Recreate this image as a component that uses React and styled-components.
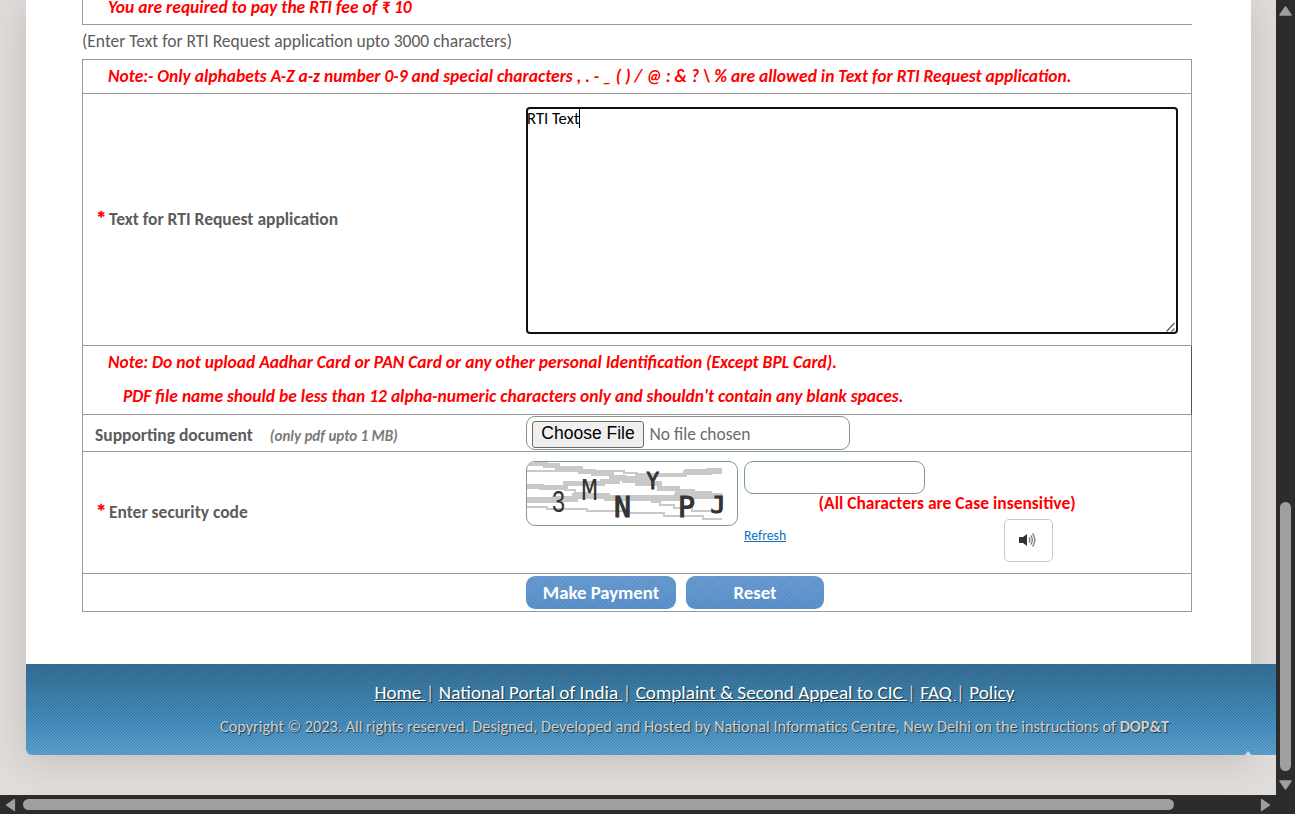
import React from "react";
import styled, { createGlobalStyle } from "styled-components";

const textFont = `Calibri, Carlito, Lato, sans-serif`;
const line = "#999";
const fieldBorder = "#839b83";

const GlobalStyle = createGlobalStyle`
  *, *::before, *::after { box-sizing: border-box; }
  body { margin: 0; overflow: hidden; }
`;

const Screen = styled.div`
  display: grid;
  grid-template: 795px 19px / 1276px 19px;
  width: 1295px;
  height: 814px;
  overflow: hidden;
  background: #2c2c2c;
  font-family: ${textFont};
  font-size: 17.5px;
  line-height: 34px;
  color: #5c5c5c;
`;

const Viewport = styled.main`
  overflow: hidden;
  padding-left: 26px;
  background: #dfdcda;
`;

const Page = styled.div`
  display: flex;
  flex-direction: column;
  width: 1225px;
  height: 755px;
  background: #fff;
  border-radius: 0 0 6px 6px;
  box-shadow: 0 5px 36px rgba(0, 0, 0, 0.14);
`;

const Content = styled.div`
  display: flex;
  flex-direction: column;
  height: 664px;
  padding: 0 59px 0 56px;
`;

const FeeBox = styled.div`
  height: 25px;
  padding-left: 25px;
  border: solid ${line};
  border-width: 0 0 1px 1px;
  line-height: 14px;
`;

const Hint = styled.div`
  height: 34px;
  line-height: 32px;
`;

const Table = styled.div`
  width: 1110px;
  border: solid ${line};
  border-width: 1px 1px 0;
`;

const Row = styled.div`
  display: flex;
  align-items: ${(p) => (p.$top ? "flex-start" : "center")};
  height: ${(p) => p.$h}px;
  border-bottom: 1px solid ${line};
`;

const NoteRow = styled(Row)`
  flex-direction: column;
  align-items: flex-start;
  justify-content: center;
  padding: 0 0 2px 25px;
  ${(p) => p.$edge && `margin-right: -1px; border-right: 1px solid #5a5052; padding-bottom: 3px;`}
`;

const Note = styled.div`
  color: #f00;
  font-weight: 700;
  font-style: italic;
  white-space: pre;
  padding-left: ${(p) => p.$indent || 0}px;
`;

const Label = styled.div`
  display: flex;
  align-items: baseline;
  align-self: center;
  width: 443px;
  padding: ${(p) => (p.$plain ? "5px 0 0 12px" : "0 0 2px 13px")};
  font-weight: 700;
  white-space: pre;
`;

const Star = styled.span`
  width: 13px;
  color: #f00;
  font-size: 21px;
  line-height: 30px;
  -webkit-text-stroke: 0.4px #f00;
`;

const SmallNote = styled.span`
  margin-left: 17px;
  color: #7a7a7a;
  font-size: 15px;
  font-style: italic;
`;

const TextArea = styled.div`
  position: relative;
  display: flex;
  width: 652px;
  height: 227px;
  margin-top: 1px;
  border: 2px solid #101010;
  border-radius: 4px;
  color: #000;
  font-size: 16.67px;
  line-height: 18px;
`;

const TypedText = styled.span`
  height: 19px;
  margin-left: -1px;
  border-right: 1px solid #000;
`;

const Grip = styled.svg`
  position: absolute;
  right: 0;
  bottom: 0;
`;

const FileField = styled.div`
  display: flex;
  align-items: center;
  gap: 5.5px;
  width: 324px;
  height: 34px;
  padding: 2px 0 0 5px;
  border: 1px solid ${fieldBorder};
  border-radius: 9px;
  color: #6b6b6b;
`;

const FileButton = styled.button`
  width: 112px;
  height: 27px;
  padding: 0 0 1px;
  border: 1px solid #6b6b6b;
  border-radius: 3px;
  background: #efefef;
  color: #000;
  font: 17.5px "Liberation Sans", Arial, sans-serif;
`;

const Captcha = styled.svg`
  display: block;
  width: 212px;
  height: 65px;
  margin: 9px 6px 0 0;
  border: 1px solid ${fieldBorder};
  border-radius: 9px;
`;

const CodeColumn = styled.div`
  display: flex;
  flex-direction: column;
  padding-top: 9px;
`;

const CodeField = styled.input`
  width: 181px;
  height: 33px;
  border: 1px solid ${fieldBorder};
  border-radius: 9px;
  background: #fff;
`;

const CaseNote = styled.div`
  height: 25px;
  padding-left: 74.6px;
  color: #f00;
  font-weight: 700;
  line-height: 18px;
`;

const RefreshLine = styled.div`
  display: flex;
  justify-content: space-between;
  width: 309px;
`;

const Refresh = styled.a`
  color: #1472bd;
  font-size: 13.75px;
  line-height: 33px;
  text-decoration: underline;
`;

const AudioButton = styled.button`
  display: flex;
  align-items: center;
  justify-content: center;
  width: 49px;
  height: 43px;
  padding: 0 1px 1px 0;
  border: 1px solid #c9c9c9;
  border-radius: 5px;
  background: #fff;
`;

const Action = styled.button`
  width: ${(p) => p.$w}px;
  height: 33px;
  margin: 2px 10px 0 0;
  padding: 0 0 1px;
  border: 0;
  border-radius: 9px;
  background:
    repeating-linear-gradient(45deg, rgba(30, 80, 150, 0.07) 0 1px, transparent 1px 3px),
    repeating-linear-gradient(-45deg, rgba(30, 80, 150, 0.07) 0 1px, transparent 1px 3px),
    linear-gradient(#6a9cd1, #5c92cb);
  color: #fff;
  font: 700 18.75px ${textFont};
`;

const Footer = styled.footer`
  position: relative;
  display: flex;
  flex-direction: column;
  align-items: center;
  width: 1336px;
  height: 91px;
  padding-top: 12px;
  border-radius: 0 0 0 6px;
  background:
    linear-gradient(45deg, transparent 36%, rgba(10, 50, 80, 0.26) 36% 64%, transparent 64%) 0 0 / 3px 3px,
    linear-gradient(#376f97 0%, #4085b0 40%, #4791c3 65%, #62a5d4 100%);
  color: #d3cec9;
  text-shadow: 1px 1px 1px rgba(0, 0, 0, 0.6);
`;

const LinkLine = styled.nav`
  width: 1336px;
  padding-left: 348.5px;
  font-size: 19.17px;
  white-space: pre;
`;

const FootLink = styled.a`
  color: #fff;
  text-decoration: underline;
`;

const Copyright = styled.div`
  width: 1336px;
  padding-left: 194px;
  font-size: 16.25px;
  white-space: pre;
`;

const Notch = styled.svg`
  position: absolute;
  left: 1219px;
  bottom: 0;
`;

const VBar = styled.div`
  display: flex;
  flex-direction: column;
  align-items: center;
  padding: 6px 0 4px;
`;

const HBar = styled.div`
  display: flex;
  align-items: center;
  padding-left: 4px;
`;

const Thumb = styled.div`
  flex: none;
  width: ${(p) => p.$w}px;
  height: ${(p) => p.$h}px;
  margin: ${(p) => p.$m};
  border-radius: 6px;
  background: #9f9f9f;
`;

const Arrow = styled.svg`
  display: block;
  flex: none;
  transform: rotate(${(p) => p.$turn || 0}deg);
`;

function ScrollArrow({ turn }) {
  return (
    <Arrow $turn={turn} width="13" height="10" viewBox="0 0 13 10">
      <path d="M6.5 1 L12 9 H1 Z" fill="#9f9f9f" stroke="#9f9f9f" strokeWidth="1.4" strokeLinejoin="round" />
    </Arrow>
  );
}

const noise = [
  { w: 5, d: "M1 1 H18 V3 H30 V6 H53 V9 H66 V11 H84 V15 H97 V18 H110 V21 H132 V26 H150 V29 H165 V31 H182 V34 H196" },
  { w: 2, d: "M0 9 H97 V11 H110 V13 H124" },
  { w: 4, d: "M108 13 H158 V10 H176" },
  { w: 6, d: "M158 10 H182 V9 H195" },
  { w: 5, d: "M0 24 H14 V25 H38 V21 H75 V19 H90 V16 H125" },
  { w: 6, d: "M0 38 H28 V37 H48 V34 H80 V36 H150 V34 H195" },
  { w: 2, d: "M0 45 H20 V47 H60 V49 H102 V51 H137 V54 H176 V57 H195" },
  { w: 2, d: "M37 28 H48 V31 H62" },
  { w: 2, d: "M124 40 H133 V43 H147 V46 H165 V49 H195" },
];

const glyphs = [
  { c: "3", x: 24.5, y: 50, s: 28, w: 14, thin: true },
  { c: "M", x: 54, y: 38, s: 29, w: 17, thin: true },
  { c: "Y", x: 119.5, y: 27, s: 23, w: 12.5 },
  { c: "N", x: 87, y: 55, s: 28.5, w: 17 },
  { c: "P", x: 151, y: 55, s: 28.5, w: 17 },
  { c: "J", x: 183.5, y: 50.5, s: 22.5, w: 15 },
];

function CaptchaImage() {
  return (
    <Captcha viewBox="0 0 210 63">
      <g fill="none" stroke="#c9c9c9" shapeRendering="crispEdges">
        {noise.map((n, i) => (
          <path key={i} d={n.d} strokeWidth={n.w} />
        ))}
      </g>
      {glyphs.map((g) => (
        <text
          key={g.c}
          x={g.x}
          y={g.y}
          fontFamily={g.thin ? "'Liberation Mono', monospace" : "'DejaVu Sans Mono', monospace"}
          fontSize={g.thin ? g.s * 1.1 : g.s}
          fill="#333"
          stroke="#333"
          strokeWidth={g.thin ? 0 : 1.1}
          textLength={g.w}
          lengthAdjust="spacingAndGlyphs"
        >
          {g.c}
        </text>
      ))}
    </Captcha>
  );
}

function Speaker() {
  return (
    <svg width="18" height="16" viewBox="0 0 18 16">
      <path d="M0 5 H4 L8 2 V14 L4 11 H0 Z" fill="#333" />
      <g fill="none" stroke="#858585" strokeWidth="1.4">
        <path d="M10 5.5 Q11.8 8 10 10.5" />
        <path d="M11.8 3.5 Q15 8 11.8 12.5" />
        <path d="M13.5 1.5 Q18.3 8 13.5 14.5" />
      </g>
    </svg>
  );
}

const links = ["Home ", "National Portal of India ", "Complaint & Second Appeal to CIC ", "FAQ ", "Policy"];

export default function App() {
  return (
    <Screen>
      <GlobalStyle />
      <Viewport>
        <Page>
          <Content>
            <FeeBox>
              <Note>You are required to pay the RTI fee of ₹ 10</Note>
            </FeeBox>
            <Hint>(Enter Text for RTI Request application upto 3000 characters)</Hint>
            <Table>
              <NoteRow $h={34}>
                <Note>
                  {"Note:- Only alphabets A-Z a-z number 0-9 and special characters , . - _ ( ) / @ : & ? \\ % are allowed in Text for RTI Request application."}
                </Note>
              </NoteRow>
              <Row $h={252}>
                <Label>
                  <Star>*</Star>Text for RTI Request application
                </Label>
                <TextArea>
                  <TypedText>RTI Text</TypedText>
                  <Grip width="10" height="10" viewBox="0 0 10 10" fill="none" stroke="#555" strokeWidth="1.1">
                    <path d="M0.5 9.5 L8.5 1 M5.5 9.5 L8.5 6.5" />
                  </Grip>
                </TextArea>
              </Row>
              <NoteRow $h={69} $edge>
                <Note>Note: Do not upload Aadhar Card or PAN Card or any other personal Identification (Except BPL Card).</Note>
                <Note $indent={15}>
                  PDF file name should be less than 12 alpha-numeric characters only and shouldn't contain any blank spaces.
                </Note>
              </NoteRow>
              <Row $h={37}>
                <Label $plain>
                  Supporting document<SmallNote>(only pdf upto 1 MB)</SmallNote>
                </Label>
                <FileField>
                  <FileButton>Choose File</FileButton>
                  No file chosen
                </FileField>
              </Row>
              <Row $h={122} $top>
                <Label>
                  <Star>*</Star>Enter security code
                </Label>
                <CaptchaImage />
                <CodeColumn>
                  <CodeField />
                  <CaseNote>(All Characters are Case insensitive)</CaseNote>
                  <RefreshLine>
                    <Refresh>Refresh</Refresh>
                    <AudioButton>
                      <Speaker />
                    </AudioButton>
                  </RefreshLine>
                </CodeColumn>
              </Row>
              <Row $h={38} $top>
                <Label />
                <Action $w={150}>Make Payment</Action>
                <Action $w={138}>Reset</Action>
              </Row>
            </Table>
          </Content>
          <Footer>
            <LinkLine>
              {links.map((text, i) => (
                <React.Fragment key={text}>
                  {i > 0 && "| "}
                  <FootLink>{text}</FootLink>
                </React.Fragment>
              ))}
            </LinkLine>
            <Copyright>
              Copyright © 2023. All rights reserved. Designed, Developed and Hosted by National Informatics Centre, New Delhi on the instructions of{" "}
              <b>DOP&amp;T</b>
            </Copyright>
            <Notch width="6" height="4" viewBox="0 0 6 4">
              <path d="M0 4 L3 0 L6 4 Z" fill="#dfdcda" />
            </Notch>
          </Footer>
        </Page>
      </Viewport>
      <VBar>
        <ScrollArrow />
        <Thumb $w={11} $h={269} $m="486px 0 9px" />
        <ScrollArrow turn={180} />
      </VBar>
      <HBar>
        <ScrollArrow turn={-90} />
        <Thumb $w={1151} $h={11} $m="0 85px 0 6px" />
        <ScrollArrow turn={90} />
      </HBar>
    </Screen>
  );
}
